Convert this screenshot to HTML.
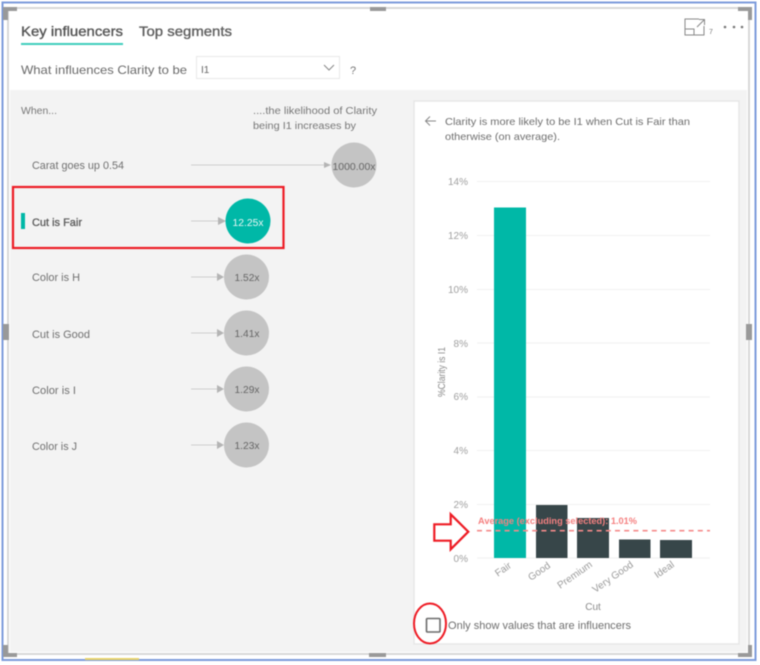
<!DOCTYPE html>
<html><head><meta charset="utf-8">
<style>
html,body{margin:0;padding:0;width:760px;height:665px;overflow:hidden;background:#fff}
svg{display:block;filter:blur(0.5px)}
text{font-family:"Liberation Sans",sans-serif;fill:#6f6f6f;font-size:11px}
.l{font-size:11px;fill:#707070}
.b{font-size:11px;fill:#5a5a5a}
.a{font-size:10px;fill:#9a9a9a}
.g{font-size:10px;fill:#a0a0a0;text-anchor:end}
.c{font-size:10px;fill:#666;text-anchor:middle}
</style></head><body>
<svg width="760" height="665" viewBox="0 0 760 665" xmlns="http://www.w3.org/2000/svg">
<rect width="760" height="665" fill="#fff"/>
<!-- outer blue border -->
<rect x="2.5" y="2.5" width="753" height="657.5" fill="#fff" stroke="#7c9bdb" stroke-width="2"/>
<!-- grey inner frame -->
<rect x="8" y="8" width="741" height="646" fill="#fff" stroke="#d4d4d4" stroke-width="1.8"/>
<!-- grey area -->
<rect x="10" y="90" width="737" height="562" fill="#f3f3f3"/>
<!-- handles -->
<g fill="#999">
<path d="M3 7H17V11H8V20H3Z"/>
<path d="M370 7H386V11H370Z"/>
<path d="M738 7H752V20H748V11H738Z"/>
<rect x="3" y="324" width="6" height="16"/>
<rect x="746" y="324" width="6" height="16"/>
<path d="M3 645H8V653H17V657H3Z"/>
<rect x="369" y="653" width="17" height="4"/>
<path d="M748 645H752V657H738V653H748Z"/>
</g>
<rect x="85" y="658" width="54" height="2" fill="#e8d36a"/>
<!-- tabs -->
<text x="21" y="36" style="font-size:14px;fill:#555;stroke:#555;stroke-width:0.35" textLength="102" lengthAdjust="spacingAndGlyphs">Key influencers</text>
<text x="139" y="36" style="font-size:14px;fill:#5f5f5f;stroke:#5f5f5f;stroke-width:0.35" textLength="93" lengthAdjust="spacingAndGlyphs">Top segments</text>
<rect x="21" y="43" width="102" height="2" fill="#3fcdbd"/>
<!-- question -->
<text x="21" y="74" style="font-size:12px;fill:#6a6a6a" textLength="166" lengthAdjust="spacingAndGlyphs">What influences Clarity to be</text>
<rect x="196.500" y="56.500" width="143" height="22" fill="#fff" stroke="#e8e8e8"/>
<text x="201" y="73" style="font-size:10px;fill:#666">I1</text>
<path d="M324 65L329 70L334 65" fill="none" stroke="#888" stroke-width="1"/>
<text x="350" y="74" style="font-size:11px;fill:#777">?</text>
<!-- headers -->
<text x="21" y="114" class="a" style="fill:#777" textLength="36" lengthAdjust="spacingAndGlyphs">When...</text>
<text x="253" y="114" class="a" style="fill:#777" textLength="124" lengthAdjust="spacingAndGlyphs">....the likelihood of Clarity</text>
<text x="253" y="129" class="a" style="fill:#777" textLength="103" lengthAdjust="spacingAndGlyphs">being I1 increases by</text>
<!-- rows -->
<g stroke="#cfcfcf" stroke-width="1">
<path d="M191 165H325"/><path d="M191 221H219"/><path d="M191 277H217"/><path d="M191 333H217"/><path d="M191 389H217"/><path d="M191 445H217"/>
</g>
<g fill="#b4b4b4">
<path d="M324 162L331 165L324 168Z"/><path d="M218 217L226 221L218 225Z"/><path d="M217 273L224 277L217 281Z"/><path d="M217 329L224 333L217 337Z"/><path d="M217 385L224 389L217 393Z"/><path d="M217 441L224 445L217 449Z"/>
</g>
<circle cx="354" cy="165" r="22.500" fill="#c4c4c4"/>
<circle cx="248" cy="221" r="22.500" fill="#00b8a7"/>
<circle cx="246.500" cy="277" r="22.500" fill="#c4c4c4"/>
<circle cx="246.500" cy="333" r="22.500" fill="#c4c4c4"/>
<circle cx="246.500" cy="389" r="22.500" fill="#c4c4c4"/>
<circle cx="246.500" cy="445" r="22.500" fill="#c4c4c4"/>
<text x="354" y="170" class="c" textLength="43" lengthAdjust="spacingAndGlyphs">1000.00x</text>
<text x="248" y="226" class="c" style="fill:#e6f7f5" textLength="31" lengthAdjust="spacingAndGlyphs">12.25x</text>
<text x="247" y="281" class="c" textLength="25" lengthAdjust="spacingAndGlyphs">1.52x</text>
<text x="247" y="337" class="c" textLength="25" lengthAdjust="spacingAndGlyphs">1.41x</text>
<text x="247" y="393" class="c" textLength="25" lengthAdjust="spacingAndGlyphs">1.29x</text>
<text x="247" y="449" class="c" textLength="25" lengthAdjust="spacingAndGlyphs">1.23x</text>
<text x="32" y="169" class="l" textLength="92" lengthAdjust="spacingAndGlyphs">Carat goes up 0.54</text>
<text x="32" y="226" class="b" style="stroke:#5a5a5a;stroke-width:0.3" textLength="50" lengthAdjust="spacingAndGlyphs">Cut is Fair</text>
<text x="32" y="281" class="l" textLength="48" lengthAdjust="spacingAndGlyphs">Color is H</text>
<text x="32" y="338" class="l" textLength="58" lengthAdjust="spacingAndGlyphs">Cut is Good</text>
<text x="32" y="394" class="l" textLength="44" lengthAdjust="spacingAndGlyphs">Color is I</text>
<text x="32" y="450" class="l" textLength="45" lengthAdjust="spacingAndGlyphs">Color is J</text>
<rect x="21" y="213" width="4" height="16" fill="#00b8a7"/>
<rect x="13" y="187" width="270.500" height="61" fill="none" stroke="#ee1c25" stroke-width="2.200"/>
<!-- card -->
<rect x="414" y="101" width="325" height="543" fill="#fff" stroke="#e6e6e6" stroke-width="1.400"/>
<path d="M436 121H425.500M430 116.500L425.500 121L430 125.500" fill="none" stroke="#888" stroke-width="1"/>
<text x="445" y="125" class="a" style="fill:#6e6e6e;font-size:10.500px" textLength="245" lengthAdjust="spacingAndGlyphs">Clarity is more likely to be I1 when Cut is Fair than</text>
<text x="445" y="140" class="a" style="fill:#6e6e6e;font-size:10.500px" textLength="115" lengthAdjust="spacingAndGlyphs">otherwise (on average).</text>
<!-- grid -->
<g stroke="#f1f1f1" stroke-width="1">
<path d="M477 181.500H710"/><path d="M477 235.500H710"/><path d="M477 289.500H710"/><path d="M477 343H710"/><path d="M477 397H710"/><path d="M477 450.500H710"/><path d="M477 504.500H710"/><path d="M477 558H710"/>
</g>
<text x="468" y="185" class="g">14%</text>
<text x="468" y="239" class="g">12%</text>
<text x="468" y="293" class="g">10%</text>
<text x="468" y="347" class="g">8%</text>
<text x="468" y="400" class="g">6%</text>
<text x="468" y="454" class="g">4%</text>
<text x="468" y="508" class="g">2%</text>
<text x="468" y="562" class="g">0%</text>
<text transform="translate(445,372) rotate(-90)" class="a" style="text-anchor:middle;fill:#8a8a8a" textLength="50" lengthAdjust="spacingAndGlyphs">%Clarity is I1</text>
<!-- bars -->
<rect x="494" y="207.500" width="32" height="350.500" fill="#00b8a7"/>
<g fill="#374649">
<rect x="536" y="505" width="31.500" height="53"/>
<rect x="577" y="518" width="32" height="40"/>
<rect x="619" y="539.500" width="31.500" height="18.500"/>
<rect x="660" y="540" width="32" height="18"/>
</g>
<!-- avg -->
<text x="478" y="524" style="font-size:9px;font-weight:bold;fill:#f58080" textLength="159" lengthAdjust="spacingAndGlyphs">Average (excluding selected): 1.01%</text>
<path d="M477 530.700H710" stroke="#f58a8a" stroke-width="1.600" stroke-dasharray="5 4.200" fill="none"/>
<!-- x labels -->
<g>
<text transform="translate(512,567) rotate(-35)" class="a" style="text-anchor:end">Fair</text>
<text transform="translate(551,567) rotate(-35)" class="a" style="text-anchor:end">Good</text>
<text transform="translate(593,566) rotate(-35)" class="a" style="text-anchor:end">Premium</text>
<text transform="translate(634,566) rotate(-35)" class="a" style="text-anchor:end">Very Good</text>
<text transform="translate(675,566) rotate(-35)" class="a" style="text-anchor:end">Ideal</text>
</g>
<text x="593" y="610" class="a" style="text-anchor:middle;fill:#8a8a8a">Cut</text>
<!-- red arrow -->
<path d="M434.300 524.300H450.700V514.300L468.300 531.700L450.700 549.300V540.700H434.300Z" fill="#fff" stroke="#ee1c25" stroke-width="2.200"/>
<!-- checkbox -->
<rect x="426.500" y="618.500" width="13.500" height="13.500" rx="1" fill="#fff" stroke="#6b6b6b" stroke-width="1.600"/>
<ellipse cx="430" cy="623.500" rx="16" ry="20" fill="none" stroke="#ee1c25" stroke-width="2"/>
<text x="448" y="629" class="l" style="fill:#6e6e6e" textLength="183" lengthAdjust="spacingAndGlyphs">Only show values that are influencers</text>
<!-- top right icons -->
<path d="M699 19H685V35H704V26M685 29H694V35" fill="none" stroke="#888" stroke-width="1"/>
<path d="M697 27L704 20M699 19.500H704.500V25" fill="none" stroke="#888" stroke-width="1"/>
<text x="709" y="34" style="font-size:7px;fill:#777">7</text>
<g fill="#777"><circle cx="725" cy="27" r="1.300"/><circle cx="734" cy="27" r="1.300"/><circle cx="742" cy="27" r="1.300"/></g>
</svg>
</body></html>
